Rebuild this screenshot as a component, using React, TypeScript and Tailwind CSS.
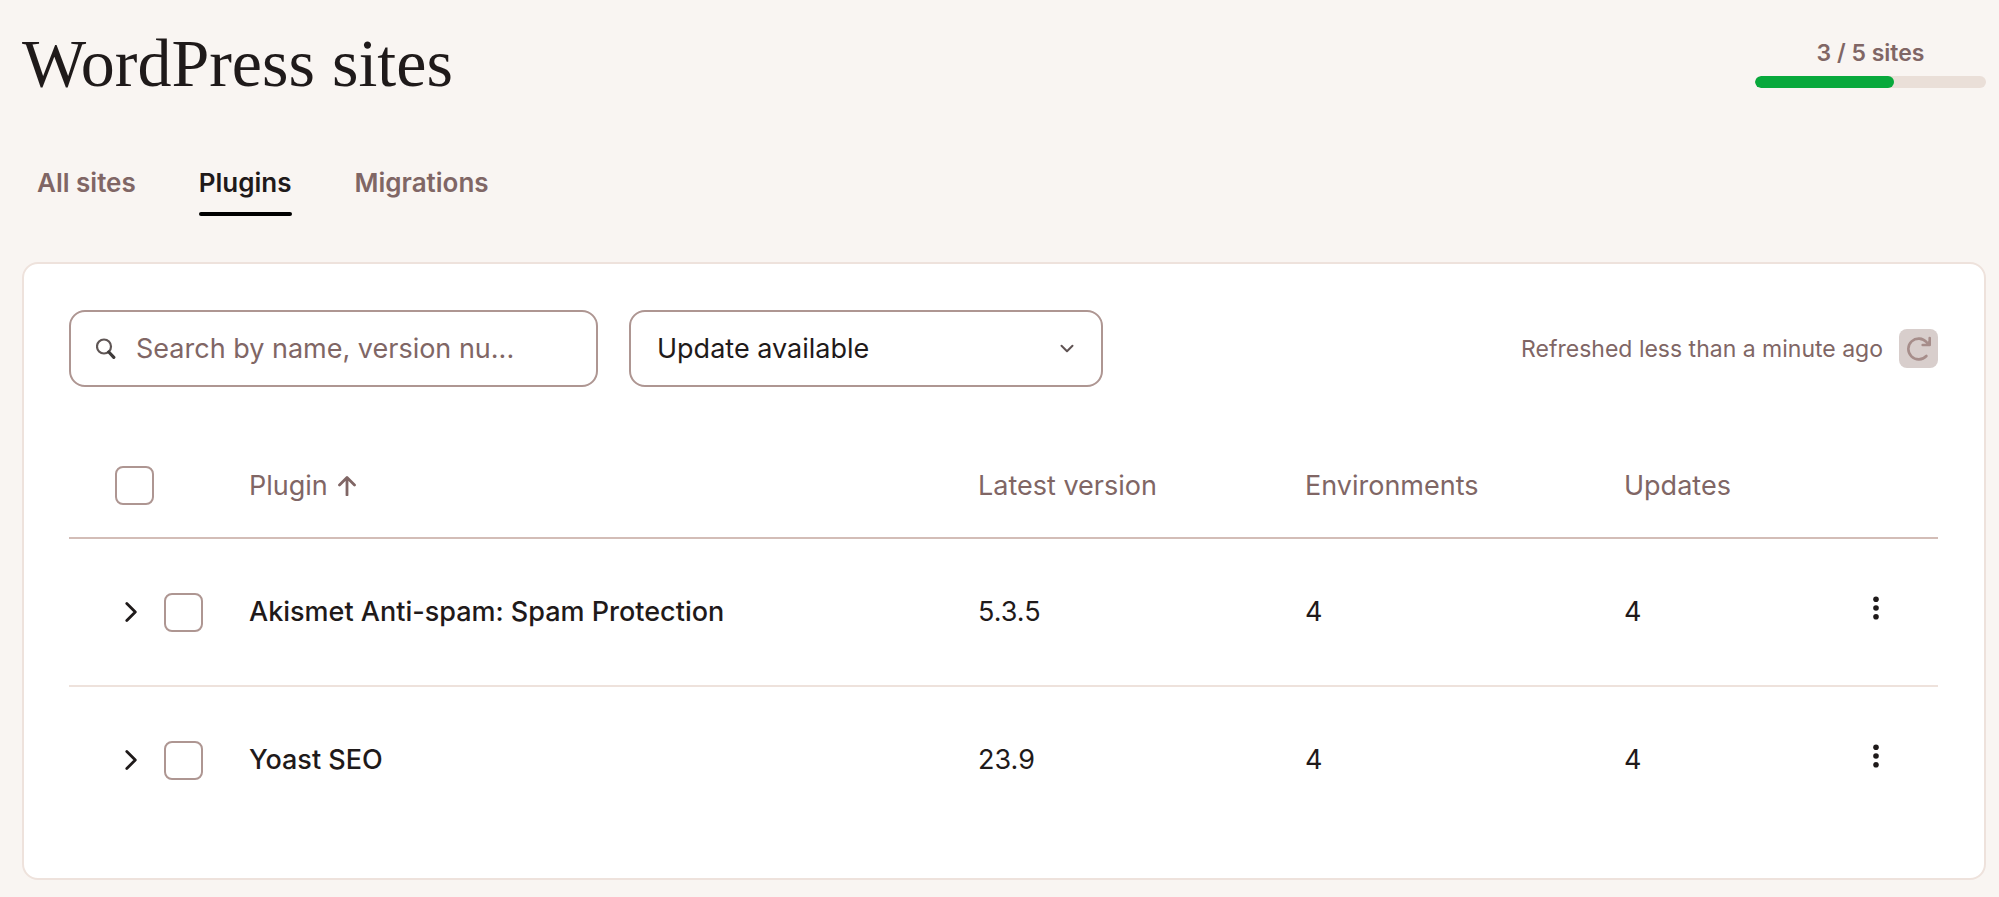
import React from "react";

type Plugin = {
  id: string;
  name: string;
  version: string;
  environments: number;
  updates: number;
};

const TABS = ["All sites", "Plugins", "Migrations"];

const PLUGINS: Plugin[] = [
  { id: "akismet", name: "Akismet Anti-spam: Spam Protection", version: "5.3.5", environments: 4, updates: 4 },
  { id: "yoast", name: "Yoast SEO", version: "23.9", environments: 4, updates: 4 },
];

const SITES_USED = 3;
const SITES_TOTAL = 5;

const SearchIcon = () => (
  <svg width="20" height="22" viewBox="0 0 20 22" fill="none" className="shrink-0" aria-hidden="true">
    <circle cx="8" cy="8.5" r="7" stroke="#5f5655" strokeWidth="2.2" />
    <path d="M12.8 14l5 5.4" stroke="#3f3b3a" strokeWidth="3.2" strokeLinecap="round" />
  </svg>
);

const ChevronDown = () => (
  <svg
    width="14"
    height="10"
    viewBox="0 0 14 10"
    fill="none"
    className="pointer-events-none absolute right-[29px] top-[34px]"
    aria-hidden="true"
  >
    <path d="M1.5 1.8L7 7.3l5.5-5.5" stroke="#5f5353" strokeWidth="2" strokeLinecap="round" strokeLinejoin="round" />
  </svg>
);

const ChevronRight = () => (
  <svg width="12" height="20" viewBox="0 0 12 20" fill="none" aria-hidden="true">
    <path d="M1.8 1.5L10.3 10l-8.5 8.5" stroke="#1f1a1a" strokeWidth="2.8" strokeLinecap="round" strokeLinejoin="round" />
  </svg>
);

const ArrowUp = () => (
  <svg width="18" height="20" viewBox="0 0 18 20" fill="none" aria-hidden="true">
    <path d="M9 19V1.8M1.5 9L9 1.5 16.5 9" stroke="#806665" strokeWidth="2.8" strokeLinecap="round" strokeLinejoin="round" />
  </svg>
);

const RefreshIcon = () => (
  <svg width="26" height="26" viewBox="0 0 26 26" fill="none" aria-hidden="true">
    <path d="M20.4 20A10.4 10.4 0 1 1 20.6 6.2" stroke="#a68d8a" strokeWidth="2.6" strokeLinecap="round" />
    <path d="M23.7 2v7h-7" stroke="#a68d8a" strokeWidth="2.6" strokeLinecap="round" strokeLinejoin="round" />
    <path d="M23.2 4.4v4.2h-4.2z" fill="#a68d8a" />
  </svg>
);

const MoreIcon = () => (
  <svg width="6" height="24" viewBox="0 0 6 24" fill="#1f1a1a" aria-hidden="true">
    <circle cx="3" cy="3.3" r="2.8" />
    <circle cx="3" cy="12" r="2.8" />
    <circle cx="3" cy="20.7" r="2.8" />
  </svg>
);

const Checkbox: React.FC<{ label: string; checked: boolean; onChange: () => void }> = ({
  label,
  checked,
  onChange,
}) => (
  <input
    type="checkbox"
    aria-label={label}
    checked={checked}
    onChange={onChange}
    className="block size-[39px] shrink-0 appearance-none rounded-lg border-2 border-[#ae9692] bg-white checked:bg-[#806665]"
  />
);

export default function App() {
  const [tab, setTab] = React.useState("Plugins");
  const [searchText, setSearchText] = React.useState("");
  const [filter, setFilter] = React.useState("update");
  const [selected, setSelected] = React.useState<string[]>([]);

  const rows = PLUGINS.filter((p) =>
    `${p.name} ${p.version}`.toLowerCase().includes(searchText.toLowerCase())
  );

  const toggle = (id: string) => {
    setSelected((prev) => (prev.includes(id) ? prev.filter((x) => x !== id) : [...prev, id]));
  };

  const toggleAll = () => {
    setSelected((prev) => (prev.length === PLUGINS.length ? [] : PLUGINS.map((p) => p.id)));
  };

  return (
    <main className="min-h-screen bg-[#f9f5f2] pt-[27px] pr-[13px] pb-4 pl-[22px] font-['Inter',sans-serif] text-[27px] leading-9 text-[#1f1a1a]">
      <header className="flex items-start justify-between">
        <h1 className="font-['Liberation_Serif',serif] text-[68px] leading-[72px]">WordPress sites</h1>
        <div className="flex w-[231px] flex-col gap-[7px] pt-2.5 text-center">
          <span className="text-[23px] leading-8 font-semibold text-[#806665]">
            {SITES_USED} / {SITES_TOTAL} sites
          </span>
          <div className="h-3 overflow-hidden rounded-full bg-[#eadfd8]">
            <div
              className="h-full rounded-full bg-[#08a93c]"
              style={{ width: `${(SITES_USED / SITES_TOTAL) * 100}%` }}
            />
          </div>
        </div>
      </header>

      {/* Tabs */}
      <nav className="mt-[66px] flex gap-[63px] px-[15px] text-[26px] font-semibold">
        {TABS.map((t) => (
          <button key={t} onClick={() => setTab(t)} className={t === tab ? "" : "text-[#806665]"}>
            {t}
            <span className={t === tab ? "mt-[11px] block h-1 rounded-full bg-black" : "mt-[11px] block h-1"} />
          </button>
        ))}
      </nav>

      <section className="mt-[46px] rounded-2xl border-2 border-[#eee2dc] bg-white pt-[46px] pr-[46px] pb-[43px] pl-[45px]">
        {/* Toolbar */}
        <div className="flex items-center gap-[31px]">
          <label className="flex h-[77px] w-[529px] items-center gap-5 rounded-2xl border-2 border-[#ae9692] px-[25px]">
            <SearchIcon />
            <input
              value={searchText}
              onChange={(e) => setSearchText(e.target.value)}
              placeholder="Search by name, version nu..."
              aria-label="Search plugins"
              className="w-full min-w-0 outline-none placeholder:text-[#806665] placeholder:opacity-100"
            />
          </label>

          <div className="relative w-[474px]">
            <select
              value={filter}
              onChange={(e) => setFilter(e.target.value)}
              aria-label="Filter plugins"
              className="block h-[77px] w-full appearance-none rounded-2xl border-2 border-[#ae9692] bg-white px-[26px]"
            >
              <option value="update">Update available</option>
              <option value="all">All plugins</option>
            </select>
            <ChevronDown />
          </div>

          <div className="ml-auto flex items-center gap-4">
            <span className="text-[23px] leading-8 text-[#806665]">Refreshed less than a minute ago</span>
            <button aria-label="Refresh" className="flex size-[39px] items-center justify-center rounded-lg bg-[#d8cecc]">
              <RefreshIcon />
            </button>
          </div>
        </div>

        {/* Table */}
        <table className="mt-[45px] w-full table-fixed border-separate border-spacing-0 text-left">
          <thead className="text-[#806665]">
            <tr className="h-[107px] *:border-b-2 *:border-[#d3bdb7] *:pt-0.5 *:font-normal">
              <th className="w-[180px] pl-[46px]">
                <Checkbox label="Select all plugins" checked={selected.length === PLUGINS.length} onChange={toggleAll} />
              </th>
              <th>
                <button className="flex items-center gap-2.5">
                  Plugin
                  <ArrowUp />
                </button>
              </th>
              <th className="w-[327px]">Latest version</th>
              <th className="w-[319px]">Environments</th>
              <th className="w-[249px]">Updates</th>
              <th className="w-[65px]" />
            </tr>
          </thead>
          <tbody>
            {rows.map((p) => (
              <tr key={p.id} className="h-[148px] *:border-b-2 *:border-[#eee2dc] last:*:border-transparent">
                <td className="pl-14">
                  <div className="flex items-center gap-[27px]">
                    <button aria-label={`Expand ${p.name}`}>
                      <ChevronRight />
                    </button>
                    <Checkbox label={`Select ${p.name}`} checked={selected.includes(p.id)} onChange={() => toggle(p.id)} />
                  </div>
                </td>
                <td className="font-medium">{p.name}</td>
                <td>{p.version}</td>
                <td>{p.environments}</td>
                <td>{p.updates}</td>
                <td>
                  <button aria-label={`Actions for ${p.name}`} className="block pb-2">
                    <MoreIcon />
                  </button>
                </td>
              </tr>
            ))}
          </tbody>
        </table>
      </section>
    </main>
  );
}
